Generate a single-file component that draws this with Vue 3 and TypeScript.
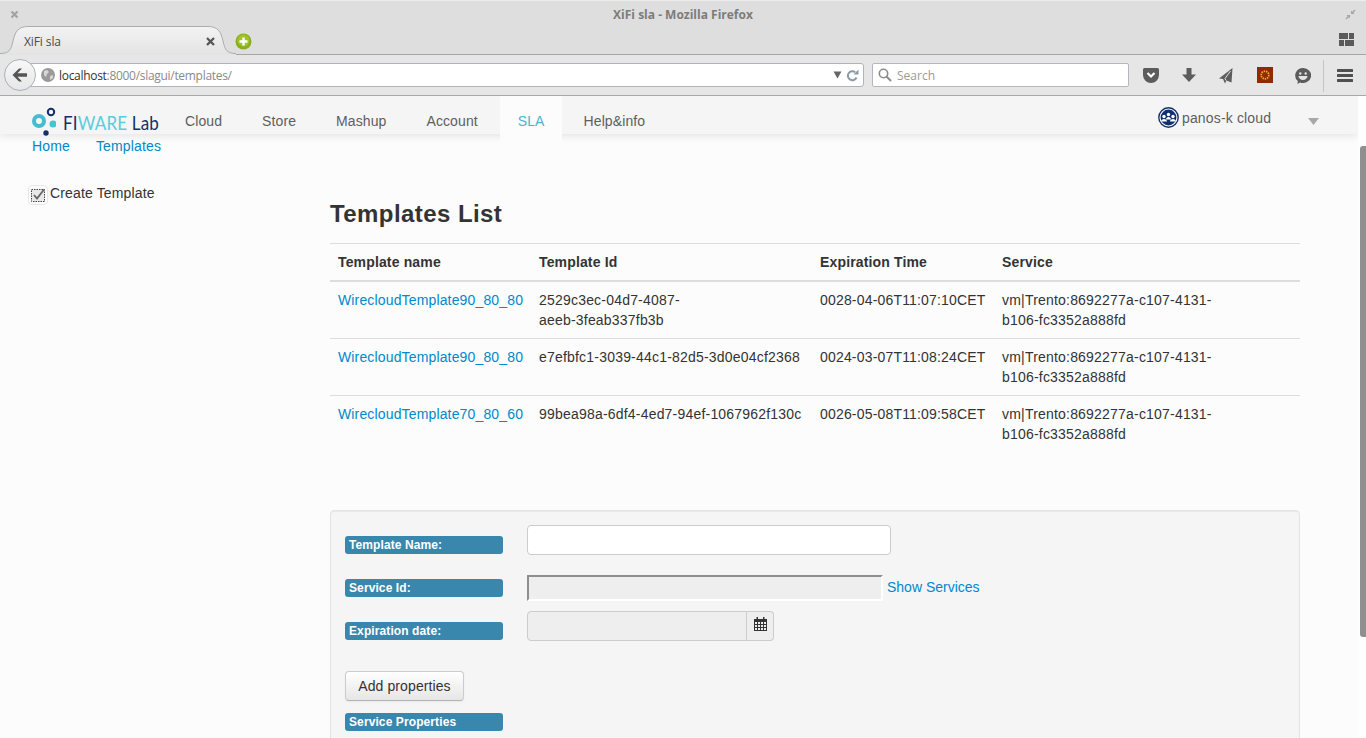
<script setup lang="ts">
interface Row { name: string; id: string; exp: string; svc: string }
const rows: Row[] = [
  { name: 'WirecloudTemplate90_80_80', id: '2529c3ec-04d7-4087-\naeeb-3feab337fb3b', exp: '0028-04-06T11:07:10CET', svc: 'vm|Trento:8692277a-c107-4131-\nb106-fc3352a888fd' },
  { name: 'WirecloudTemplate90_80_80', id: 'e7efbfc1-3039-44c1-82d5-3d0e04cf2368', exp: '0024-03-07T11:08:24CET', svc: 'vm|Trento:8692277a-c107-4131-\nb106-fc3352a888fd' },
  { name: 'WirecloudTemplate70_80_60', id: '99bea98a-6df4-4ed7-94ef-1067962f130c', exp: '0026-05-08T11:09:58CET', svc: 'vm|Trento:8692277a-c107-4131-\nb106-fc3352a888fd' },
]
const nav = ['Cloud', 'Store', 'Mashup', 'Account', 'SLA', 'Help&info']
</script>

<template>
  <div class="win">
    <div class="titlebar">
      <svg class="wx" width="9" height="9" viewBox="0 0 9 9"><path d="M1.500 1.500l6 6M7.500 1.500l-6 6" stroke="#a3a3a3" stroke-width="2.200"/></svg>
      <span class="wtitle">XiFi sla - Mozilla Firefox</span>
      <svg class="wmin" width="11" height="11" viewBox="0 0 11 11"><path d="M6 5V1.500L7.200 2.700 9.600.5l.9.9L8.300 3.800 9.500 5zM5 6v3.500L3.800 8.300 1.400 10.500.5 9.600 2.700 7.200 1.500 6z" fill="#a5a5a5"/></svg>
    </div>
    <div class="tabbar">
      <div class="tab">
        <svg class="tabshape" width="236" height="29" viewBox="0 0 236 29"><defs><linearGradient id="tg" x1="0" y1="0" x2="0" y2="1"><stop offset="0" stop-color="#f3f3f3"/><stop offset="1" stop-color="#e3e3e3"/></linearGradient></defs><path d="M0 27.500C9 27.500 11 24 13 15 15 6 18 .5 28 .5H208C218 .5 221 6 223 15 225 24 227 27.500 236 27.500V29H0z" fill="url(#tg)"/><path d="M0 27.500C9 27.500 11 24 13 15 15 6 18 .5 28 .5H208C218 .5 221 6 223 15 225 24 227 27.500 236 27.500" fill="none" stroke="#a9adb0"/></svg>
        <span class="tabtext">XiFi sla</span>
        <svg class="tabx" width="9" height="9" viewBox="0 0 9 9"><path d="M1 1l7 7M8 1l-7 7" stroke="#555" stroke-width="2.300"/></svg>
      </div>
      <svg class="plus" width="17" height="17" viewBox="0 0 17 17"><circle cx="8.500" cy="8.500" r="8" fill="#8aae1f"/><circle cx="8.500" cy="7.500" r="6" fill="#a0c22f"/><path d="M8.500 4.500v8M4.500 8.500h8" stroke="#fff" stroke-width="2.400"/></svg>
      <svg class="grid" width="15" height="15" viewBox="0 0 15 15"><path d="M0 1h9v6H0zM10 1h5v6h-5zM0 8h5v6H0zM6 8h9v6H6z" fill="#5a5a5a"/></svg>
    </div>
    <div class="navbar">
      <div class="back"><svg width="18" height="16" viewBox="0 0 18 16"><path d="M8 1.500L1.500 8 8 14.500h3L6.500 9.800H16V6.200H6.500L11 1.500z" fill="#555"/></svg></div>
      <div class="urlbar">
        <svg class="globe" width="14" height="14" viewBox="0 0 14 14"><circle cx="7" cy="7" r="7" fill="#9a9a9a"/><path d="M3 3l3-1 2 2-2 2-1 3-2-2zM9 8l3-1 0 3-3 2z" fill="#d6d6d6"/></svg>
        <span class="host">localhost</span><span class="path">:8000/slagui/templates/</span>
        <span class="spacer"></span>
        <svg width="9" height="8" viewBox="0 0 9 8"><path d="M0.500 0.500h8L4.500 7.500z" fill="#666"/></svg>
        <svg class="reload" width="13" height="13" viewBox="0 0 13 13"><path d="M10.500 8.500A4.500 4.500 0 1 1 9.200 3.200" fill="none" stroke="#8a9aa8" stroke-width="2"/><path d="M7.500 5.500h5v-5z" fill="#8a9aa8"/></svg>
      </div>
      <div class="searchbar">
        <svg width="14" height="14" viewBox="0 0 14 14"><circle cx="5.500" cy="5.500" r="4.200" fill="none" stroke="#8c8c8c" stroke-width="1.600"/><path d="M8.500 8.500l4.500 4.500" stroke="#8c8c8c" stroke-width="2"/></svg>
        <span>Search</span>
      </div>
      <div class="tools">
        <svg class="t1" width="16" height="15" viewBox="0 0 16 15"><path d="M1.500 0h13A1.500 1.500 0 0 1 16 1.500V7a8 8 0 0 1-16 0V1.500A1.500 1.500 0 0 1 1.500 0z" fill="#5c5c5c"/><path d="M4.500 5L8 8.500 11.500 5" fill="none" stroke="#fff" stroke-width="2.200"/></svg>
        <svg class="t2" width="14" height="14" viewBox="0 0 14 14"><path d="M4.500 0h5v6.500H14L7 14 0 6.500h4.500z" fill="#5c5c5c"/></svg>
        <svg class="t3" width="14" height="16" viewBox="0 0 14 16"><path d="M13.500 0L0 10.500l4 .5 2 4.500 1.500-3 5 2z" fill="#5c5c5c"/><path d="M11.500 3L6 10.500l1 2" stroke="#e4e4e4" fill="none" stroke-width="1"/></svg>
        <svg class="t4" width="16" height="16" viewBox="0 0 16 16"><rect width="16" height="16" fill="#8f2a06"/><circle cx="8" cy="8" r="3.800" fill="none" stroke="#e8a820" stroke-width="1.700" stroke-dasharray="1.500 .8"/></svg>
        <svg class="t5" width="16" height="16" viewBox="0 0 16 16"><path d="M8 0a8 7.500 0 1 1-3 14.400L2.500 16l.3-3A8 7.500 0 0 1 8 0z" fill="#5c5c5c"/><circle cx="5.300" cy="5.500" r="1.200" fill="#e4e4e4"/><circle cx="10.700" cy="5.500" r="1.200" fill="#e4e4e4"/><path d="M3.500 8h9a4.500 4 0 0 1-9 0z" fill="#e4e4e4"/></svg>
        <span class="tsep"></span>
        <svg class="t6" width="16" height="13" viewBox="0 0 16 13"><path d="M1 0h14a1 1 0 0 1 0 3H1a1 1 0 0 1 0-3zM1 5h14a1 1 0 0 1 0 3H1a1 1 0 0 1 0-3zM1 10h14a1 1 0 0 1 0 3H1a1 1 0 0 1 0-3z" fill="#4f4f4f"/></svg>
      </div>
    </div>

    <div class="viewport">
      <div class="page">
        <header class="hdr">
          <svg class="logo" width="24" height="30" viewBox="0 0 24 30"><circle cx="7" cy="14" r="5" fill="none" stroke="#45bcd0" stroke-width="4"/><circle cx="19" cy="5" r="3.200" fill="none" stroke="#12306e" stroke-width="2"/><circle cx="21" cy="17" r="3.500" fill="#45c4d4"/><circle cx="14" cy="26" r="2.700" fill="#12306e"/></svg>
          <span class="lg"><span class="lg1">FI</span><span class="lg2">WARE</span><span class="lg3"> Lab</span></span>
          <nav class="menu">
            <a v-for="n in nav" :key="n" :class="['mi', { active: n === 'SLA' }]">{{ n }}</a>
          </nav>
          <span class="spacer"></span>
          <svg class="user" width="21" height="21" viewBox="0 0 21 21"><circle cx="10.500" cy="10.500" r="9.700" fill="#fff" stroke="#12306e" stroke-width="1.400"/><circle cx="10.500" cy="10.500" r="7.900" fill="#12306e"/><circle cx="6" cy="9.500" r="1.700" fill="#fff"/><circle cx="15" cy="9.500" r="1.700" fill="#fff"/><circle cx="10.500" cy="7.500" r="1.700" fill="#fff"/><path d="M3 14.500c0-3.500 6-3.500 6 0zM12 14.500c0-3.500 6-3.500 6 0zM8 12.500c0-3.500 5-3.500 5 0z" fill="#fff"/></svg>
          <span class="uname">panos-k cloud</span>
          <svg class="caret" width="11" height="7" viewBox="0 0 11 7"><path d="M0 0h11L5.500 7z" fill="#a8a8a8"/></svg>
        </header>
        <div class="crumbs"><a>Home</a><a>Templates</a></div>
        <div class="body">
          <aside class="side">
            <label class="chk">
              <span class="box"><svg width="14" height="14" viewBox="0 0 14 14"><rect x="0.500" y="1.500" width="13" height="12" fill="#e9e9e9" stroke="#444" stroke-dasharray="1.500 1"/><path d="M3 7l3 3.500L13 1.500" fill="none" stroke="#666" stroke-width="1.800"/></svg></span>
              <span>Create Template</span>
            </label>
          </aside>
          <main class="main">
            <h1>Templates List</h1>
            <table>
              <thead>
                <tr><th class="c1">Template name</th><th class="c2">Template Id</th><th class="c3">Expiration Time</th><th class="c4">Service</th></tr>
              </thead>
              <tbody>
                <tr v-for="r in rows" :key="r.id">
                  <td><a>{{ r.name }}</a></td>
                  <td>{{ r.id }}</td>
                  <td class="nowrap">{{ r.exp }}</td>
                  <td>{{ r.svc }}</td>
                </tr>
              </tbody>
            </table>
            <section class="well">
              <div class="frow r1">
                <span class="lab">Template Name:</span>
                <input class="txt" type="text" />
              </div>
              <div class="frow r2">
                <span class="lab">Service Id:</span>
                <input class="inset" type="text" disabled />
                <a class="show">Show Services</a>
              </div>
              <div class="frow r3">
                <span class="lab">Expiration date:</span>
                <div class="dategroup">
                  <input class="dis" type="text" disabled />
                  <span class="addon"><svg width="13" height="14" viewBox="0 0 13 14"><path d="M0 2h13v12H0z" fill="#333"/><path d="M1 5h2v2H1zM4 5h2v2H4zM7 5h2v2H7zM10 5h2v2h-2zM1 8h2v2H1zM4 8h2v2H4zM7 8h2v2H7zM10 8h2v2h-2zM1 11h2v2H1zM4 11h2v2H4zM7 11h2v2H7zM10 11h2v2h-2z" fill="#eee"/><path d="M2.500 0h1.500v3.500H2.500zM9 0h1.500v3.500H9z" fill="#333"/></svg></span>
                </div>
              </div>
              <button class="btn" type="button">Add properties</button>
              <span class="lab props">Service Properties</span>
            </section>
          </main>
        </div>
      </div>
      <div class="track"><div class="thumb"></div></div>
    </div>
  </div>
</template>

<style>
html, body { margin: 0; padding: 0; height: 100%; overflow: hidden; }
</style>

<style scoped>
.win { width: 1366px; height: 738px; overflow: hidden; display: flex; flex-direction: column; background: #dedede; font-family: "Liberation Sans", Arial, sans-serif; }
.spacer { flex: 1; }

.titlebar { height: 27px; flex: none; display: flex; align-items: center; justify-content: center; position: relative; border-top: 1px solid #ececec; box-sizing: border-box; }
.wx { position: absolute; left: 10px; top: 9px; }
.wmin { position: absolute; right: 10px; top: 8px; }
.wtitle { font: bold 12px "Open Sans", sans-serif; color: #7c7c7c; margin-top: 1px; }

.tabbar { height: 28px; flex: none; position: relative; border-bottom: 1px solid #a6a6a6; box-sizing: border-box; }
.tab { position: absolute; left: 0; top: -1px; width: 236px; height: 29px; }
.tabshape { position: absolute; left: 0; top: 0; }
.tabtext { position: absolute; left: 24px; top: 7px; font: 12px "Open Sans", sans-serif; color: #4a4a4a; letter-spacing: -0.1px; }
.tabx { position: absolute; left: 206px; top: 11px; }
.plus { position: absolute; left: 235px; top: 6px; }
.grid { position: absolute; left: 1339px; top: 5px; }

.navbar { height: 41px; flex: none; display: flex; align-items: center; position: relative; background: #e6e6e6; border-bottom: 1px solid #a8a8a8; box-sizing: border-box; padding: 0 0 0 30px; }
.back { position: absolute; left: 4px; top: 4px; width: 32px; height: 32px; border-radius: 50%; box-sizing: border-box; border: 1px solid #a9b1b8; background: linear-gradient(#f8f8f8, #e6e6e6); display: flex; align-items: center; justify-content: center; z-index: 1; }
.urlbar { width: 834px; height: 24px; box-sizing: border-box; background: #fff; border: 1px solid #b0b4b8; border-radius: 0 3px 3px 0; display: flex; align-items: center; padding: 0 4px 0 10px; font: 12px "Open Sans", sans-serif; }
.globe { margin-right: 4px; }
.host { color: #333; letter-spacing: -0.3px; }
.path { color: #8a8a8a; letter-spacing: -0.3px; }
.reload { margin-left: 4px; }
.searchbar { width: 257px; height: 24px; box-sizing: border-box; margin-left: 8px; background: #fff; border: 1px solid #b4b8bc; border-radius: 2px; display: flex; align-items: center; padding-left: 5px; gap: 5px; font: 12px "Open Sans", sans-serif; color: #9b9b9b; }
.tools { position: absolute; left: 1143px; top: 0; height: 40px; width: 223px; }
.tools svg { position: absolute; }
.t1 { left: 0; top: 13px; }
.t2 { left: 39px; top: 13px; }
.t3 { left: 76px; top: 13px; }
.t4 { left: 114px; top: 12px; }
.t5 { left: 152px; top: 13px; }
.tsep { position: absolute; left: 180px; top: 5px; width: 1px; height: 32px; background: #c4c4c4; }
.t6 { left: 194px; top: 14px; }

.viewport { flex: 1; display: flex; min-height: 0; background: #fff; }
.page { flex: 1; min-width: 0; background: #fcfcfc; overflow: hidden; }
.track { width: 8px; flex: none; background: #fefefe; position: relative; }
.thumb { position: absolute; left: 2px; right: 0; top: 50px; height: 491px; background: #8f8f8f; border-radius: 3px 0 0 3px; }

.hdr { height: 38px; background: #f5f5f5; box-shadow: 0 2px 8px rgba(0,0,0,.1); display: flex; align-items: flex-start; position: relative; }
.logo { margin: 11px 0 0 32px; flex: none; }
.lg { position: absolute; left: 63px; top: 13px; font: 20px/26px "Lato", sans-serif; white-space: pre; letter-spacing: .2px; transform: scaleX(.85); transform-origin: left center; }
.lg1, .lg3 { color: #12306e; }
.lg2 { color: #58cddd; font-weight: 400; }
.menu { display: flex; position: absolute; left: 165px; top: 0; height: 46px; }
.mi { padding: 0 20px; font-size: 14px; line-height: 50px; height: 46px; color: #5e5e5e; letter-spacing: .1px; }
.mi:nth-child(5) { padding: 0 17.500px 0 18px; margin-left: 2px; margin-right: 1.500px; }
.mi.active { color: #4ab5cf; background: #fcfcfc; }
.user { position: absolute; left: 1158px; top: 11px; }
.uname { position: absolute; left: 1182px; top: 14px; font-size: 14px; color: #5e5e5e; letter-spacing: .15px; }
.caret { position: absolute; left: 1308px; top: 22px; }

.crumbs { display: flex; gap: 26px; padding-left: 32px; height: 24px; font-size: 14px; line-height: 24px; color: #0088cc; position: relative; letter-spacing: .15px; }
.body { display: flex; }
.side { width: 330px; flex: none; padding-left: 31px; box-sizing: border-box; padding-top: 23px; }
.chk { display: flex; align-items: center; gap: 5px; font-size: 14px; color: #333; height: 24px; letter-spacing: .15px; }
.box { width: 14px; height: 14px; margin-top: 3px; display: block; line-height: 0; outline: 1px solid #e8e8e8; outline-offset: 2px; border-radius: 1px; }
.main { width: 970px; flex: none; }
h1 { margin: 40px 0 0; font-size: 24px; line-height: 32px; font-weight: bold; color: #333; letter-spacing: .43px; }
table { width: 970px; margin-top: 13px; border-collapse: collapse; table-layout: fixed; font-size: 14px; color: #333; }
.c1 { width: 185px; } .c2 { width: 265px; } .c3 { width: 166px; }
th { text-align: left; padding: 8px; line-height: 20px; border-top: 1px solid #ddd; border-bottom: 2px solid #ddd; font-weight: bold; height: 20px; letter-spacing: .15px; }
td { padding: 8px; line-height: 20px; vertical-align: top; border-bottom: 1px solid #ddd; letter-spacing: .2px; white-space: pre-line; }
td.nowrap { white-space: nowrap; letter-spacing: .18px; }
tbody tr:last-child td { border-bottom: 0; }
td a { color: #0088cc; letter-spacing: .15px; }
.well { margin-top: 58px; height: 300px; box-sizing: border-box; background: #f5f5f5; border: 1px solid #e3e3e3; border-radius: 4px; box-shadow: inset 0 1px 1px rgba(0,0,0,.05); padding: 0 14px; position: relative; }
.frow { display: flex; align-items: flex-start; }
.r1 { padding-top: 14px; height: 50px; }
.r2 { height: 36px; }
.r3 { height: 60px; }
.lab { display: block; width: 158px; height: 18px; flex: none; box-sizing: border-box; background: #3a87ad; border-radius: 3px; color: #fff; font-size: 12px; font-weight: bold; line-height: 18px; padding-left: 4px; letter-spacing: .1px; }
.r1 .lab { margin-top: 11px; }
.r2 .lab { margin-top: 4px; }
.r3 .lab { margin-top: 11px; }
.txt { width: 364px; height: 30px; box-sizing: border-box; margin: 0 0 0 24px; background: #fff; border: 1px solid #ccc; border-radius: 4px; }
.inset { width: 356px; height: 26px; box-sizing: border-box; margin: 0 0 0 24px; background: #eee; border-style: solid; border-width: 2px; border-color: #8e8e8e #fff #fff #8e8e8e; }
.show { color: #0088cc; font-size: 14px; margin-left: 4px; line-height: 24px; }
.dategroup { display: flex; margin-left: 24px; }
.dis { width: 220px; height: 30px; box-sizing: border-box; margin: 0; background: #eee; border: 1px solid #ccc; border-radius: 4px 0 0 4px; }
.addon { width: 27px; height: 30px; box-sizing: border-box; border: 1px solid #ccc; border-left: 0; border-radius: 0 4px 4px 0; background: #eee; display: flex; align-items: flex-start; justify-content: center; padding-top: 5px; }
.btn { display: block; width: 119px; height: 30px; box-sizing: border-box; padding: 0; margin: 0; background: linear-gradient(#fff, #e6e6e6); border: 1px solid #ccc; border-bottom-color: #b3b3b3; border-radius: 4px; font: 14px "Liberation Sans", Arial, sans-serif; letter-spacing: .1px; color: #333; box-shadow: inset 0 1px 0 rgba(255,255,255,.2), 0 1px 2px rgba(0,0,0,.05); }
.props { margin-top: 12px; }
</style>
